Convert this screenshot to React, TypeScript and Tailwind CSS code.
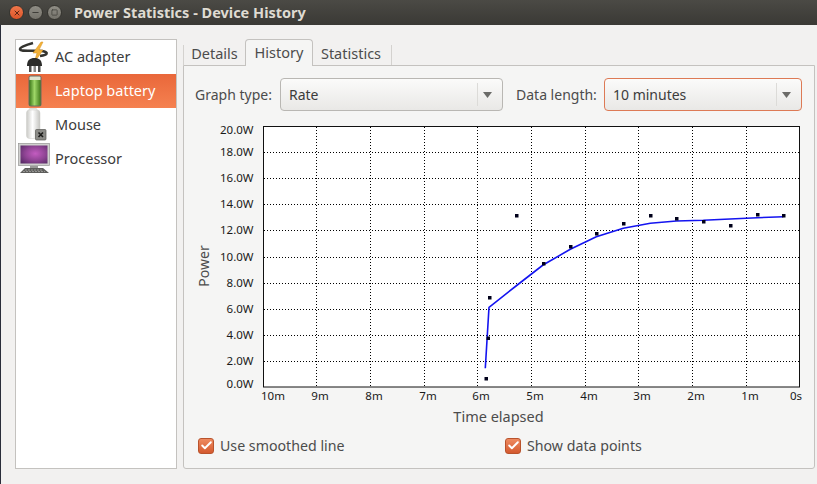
import React from 'react';
import { Check, Minus, Square, X } from 'lucide-react';

const hLines = [152.5, 178.5, 204.5, 230.5, 257.5, 283.5, 309.5, 335.5, 361.5];
const vLines = [316.5, 370.5, 424.5, 477.5, 531.5, 585.5, 638.5, 692.5, 746.5];

const yLabels: [string, number][] = [
  ['20.0W', 130], ['18.0W', 152], ['16.0W', 178], ['14.0W', 204], ['12.0W', 230], ['10.0W', 257],
  ['8.0W', 283], ['6.0W', 309], ['4.0W', 335], ['2.0W', 361], ['0.0W', 384],
];
const xLabels: [string, number][] = [
  ['10m', 273], ['9m', 320], ['8m', 374], ['7m', 428], ['6m', 481], ['5m', 535],
  ['4m', 589], ['3m', 642], ['2m', 696], ['1m', 750], ['0s', 796],
];

const linePts =
  '485.3,368.3 489,307.3 516,286 543,265 570.3,249.3 596.3,236.7 623.3,228.3 650.3,223.3 676.3,221 703.3,220.3 730,219 757.3,217.7 783.3,216.7';
const dataPts = [
  [486, 378.5], [488, 338], [489.5, 297.5], [516.5, 215.5], [543.5, 263.5], [570.5, 246.5], [596.5, 233.5],
  [623.5, 223.5], [650.5, 215.5], [676.5, 218.5], [703.5, 221.5], [730.5, 225.5], [757.5, 214.5], [783.5, 215.5],
];

const PlugIcon = () => (
  <svg width="34" height="34" viewBox="0 0 34 34" className="shrink-0">
    <path d="M15 3 C8 5 2 7 2 9 C2 12 14 10 24 11 C31 12 30 15 22 16" fill="none" stroke="#33332f" strokeWidth="2.6" />
    <path d="M23 2 L15 13 L19 13 L16 23 L25 10 L21 10 L25 2 Z" fill="#f3b23a" stroke="#d6901e" strokeWidth="0.5" />
    <path d="M9 26 C9 20 12 18 16.5 18 C21 18 24 20 24 26 Z" fill="#2c2c2a" />
    <rect x="11" y="26" width="2.5" height="6" fill="#4c4c4a" />
    <rect x="15.5" y="26" width="2.5" height="6" fill="#8a8a88" />
    <rect x="20" y="26" width="2.5" height="6" fill="#4c4c4a" />
  </svg>
);

const BatteryIcon = () => (
  <svg width="34" height="34" viewBox="0 0 34 34" className="shrink-0">
    <defs>
      <linearGradient id="batGreen" x1="0" x2="1" y1="0" y2="0">
        <stop offset="0" stopColor="#3f7a1c" />
        <stop offset="0.45" stopColor="#9fd768" />
        <stop offset="1" stopColor="#437c1c" />
      </linearGradient>
    </defs>
    <rect x="10.5" y="1.5" width="13" height="31" rx="2.5" fill="#6b6b62" />
    <rect x="11.5" y="2.5" width="11" height="4" rx="1" fill="#dfe3cf" />
    <rect x="11.5" y="6" width="11" height="25.5" rx="0.5" fill="url(#batGreen)" />
  </svg>
);

const EmptyBatteryIcon = () => (
  <svg width="34" height="34" viewBox="0 0 34 34" className="shrink-0">
    <defs>
      <linearGradient id="batWhite" x1="0" x2="1" y1="0" y2="0">
        <stop offset="0" stopColor="#c9c9c5" />
        <stop offset="0.45" stopColor="#ffffff" />
        <stop offset="1" stopColor="#c4c4c0" />
      </linearGradient>
    </defs>
    <rect x="11" y="0.5" width="8" height="3" rx="1" fill="#eeeeea" stroke="#c4c4c0" strokeWidth="0.5" />
    <rect x="8.5" y="2" width="13.5" height="28.5" rx="3" fill="url(#batWhite)" stroke="#cfcfcb" strokeWidth="0.5" />
    <rect x="17.5" y="21.5" width="10.5" height="10.5" rx="1" fill="#8a8a86" stroke="#5a5a56" strokeWidth="0.7" />
    <path d="M20.5 24.5 L25 29 M25 24.5 L20.5 29" stroke="#1c1c1a" strokeWidth="1.6" />
  </svg>
);

const MonitorIcon = () => (
  <svg width="34" height="34" viewBox="0 0 34 34" className="shrink-0">
    <defs>
      <radialGradient id="screenPurple" cx="0.55" cy="0.45" r="0.7">
        <stop offset="0" stopColor="#c35cc0" />
        <stop offset="0.55" stopColor="#8f4494" />
        <stop offset="1" stopColor="#5a2c68" />
      </radialGradient>
    </defs>
    <rect x="0.5" y="1.5" width="31" height="22" fill="#d0d0ce" stroke="#959593" strokeWidth="0.7" />
    <rect x="2.5" y="3.5" width="27" height="18" fill="url(#screenPurple)" />
    <rect x="12" y="24" width="8" height="2" fill="#9a9a98" />
    <path d="M2 31 L7 26 L25 26 L31 31 Z" fill="#5e5e5c" />
    <path d="M7 28 L25 28 M5 29.5 L27 29.5" stroke="#b8b8b6" strokeWidth="0.6" strokeDasharray="2 1" />
  </svg>
);

const devices = [
  { name: 'AC adapter', icon: <PlugIcon /> },
  { name: 'Laptop battery', icon: <BatteryIcon />, selected: true },
  { name: 'Mouse', icon: <EmptyBatteryIcon /> },
  { name: 'Processor', icon: <MonitorIcon /> },
];

const Combo = ({ value, width, focused }: { value: string; width: string; focused?: boolean }) => (
  <div
    className={`flex h-[33px] items-center rounded-[4px] border bg-gradient-to-b from-[#fbfbfa] to-[#e9e8e6] ${width} ${
      focused ? 'border-[#dd7a55]' : 'border-[#b9b7b3]'
    }`}
  >
    <span className="flex-1 pl-[8px] text-[14px] text-[#3c3c3c]">{value}</span>
    <span className="h-[23px] w-px bg-[#dcdbd8]" />
    <span className="flex w-[24px] pl-[5px]">
      <svg width="9" height="6" viewBox="0 0 9 6">
        <path d="M0 0 H9 L4.5 6 Z" fill="#6b6b68" />
      </svg>
    </span>
  </div>
);

const CheckItem = ({ label, width }: { label: string; width: string }) => (
  <div className={`flex items-center gap-[6px] ${width}`}>
    <span className="flex h-4 w-4 items-center justify-center rounded-[3px] border border-[#b9532c] bg-gradient-to-b from-[#ee8a60] to-[#d4592e]">
      <Check size={13} strokeWidth={3.5} className="text-white" />
    </span>
    <span className="text-[14.2px] text-[#4c4c4c]">{label}</span>
  </div>
);

const Chart = () => (
  <svg width="631" height="320" viewBox="184 112 631 320" className="block" fontSize="11.5">
    <rect x="263.5" y="126.5" width="536" height="260.5" fill="#fff" />
    {hLines.map((y) => (
      <line key={y} x1="264" x2="799" y1={y} y2={y} stroke="#000" strokeDasharray="1 2" />
    ))}
    {vLines.map((x) => (
      <line key={x} x1={x} x2={x} y1="127" y2="387" stroke="#000" strokeDasharray="1 2" />
    ))}
    <rect x="263.5" y="126.5" width="536" height="260.5" fill="none" stroke="#111" />
    <polyline points={linePts} fill="none" stroke="#1414f0" strokeWidth="1.6" />
    {dataPts.map(([x, y]) => (
      <rect key={x} x={x - 1.5} y={y - 1.5} width="3.5" height="3.5" fill="#00001a" />
    ))}
    {yLabels.map(([t, y]) => (
      <text key={t} x="253.5" y={y + 3.5} textAnchor="end" fill="#1a1a1a">
        {t}
      </text>
    ))}
    {xLabels.map(([t, x]) => (
      <text key={t} x={x} y="399.5" textAnchor="middle" fill="#1a1a1a">
        {t}
      </text>
    ))}
    <text x="498.5" y="421.5" textAnchor="middle" fontSize="14.5" fill="#4c4c4c">
      Time elapsed
    </text>
    <text x="0" y="0" textAnchor="middle" fontSize="14" fill="#4c4c4c" transform="translate(209 266) rotate(-90)">
      Power
    </text>
  </svg>
);

export default function App() {
  return (
    <div className="flex h-[484px] w-[817px] flex-col overflow-hidden bg-[#f2f1f0] font-['Noto_Sans',sans-serif]">
      {/* title bar */}
      <div className="flex h-[25px] shrink-0 items-center gap-[4px] bg-gradient-to-b from-[#4b4a45] to-[#3a3935] pl-[9px]">
        <span className="flex h-[15px] w-[15px] items-center justify-center rounded-full border border-[#35342f] bg-gradient-to-b from-[#f0774a] to-[#dc5529] text-[#5a2412]">
          <X size={8} strokeWidth={3} />
        </span>
        <span className="flex h-[15px] w-[15px] items-center justify-center rounded-full border border-[#35342f] bg-gradient-to-b from-[#8f8d85] to-[#75736b] text-[#3f3e39]">
          <Minus size={9} strokeWidth={3} />
        </span>
        <span className="flex h-[15px] w-[15px] items-center justify-center rounded-full border border-[#35342f] bg-gradient-to-b from-[#8f8d85] to-[#75736b] text-[#3f3e39]">
          <Square size={7} strokeWidth={2.5} />
        </span>
        <span className="ml-[8px] text-[14.5px] font-bold text-[#dfdbd2]">Power Statistics - Device History</span>
      </div>

      <div className="flex flex-1 border-l border-[#2a2d3a] pl-[14px] pt-[14px]">
        {/* device list */}
        <div className="h-[430px] w-[162px] shrink-0 border border-[#c4c2bf] bg-white">
          {devices.map((d) => (
            <div
              key={d.name}
              className={`flex h-[34px] items-center pl-[2px] ${
                d.selected ? 'bg-gradient-to-b from-[#e9673a] to-[#f58150] text-white' : 'text-[#3c3c3c]'
              }`}
            >
              {d.icon}
              <span className="ml-[3px] text-[14.5px]">{d.name}</span>
            </div>
          ))}
        </div>

        <div className="ml-[6px] flex w-[632px] flex-col">
          {/* tabs */}
          <div className="relative z-10 flex h-[26px] items-end text-[14.5px] text-[#4c4c4c]">
            <div className="flex h-[20px] w-[62px] items-center justify-center border-l border-[#d4d2cf] pb-[2px]">Details</div>
            <div className="-mb-px flex h-[27px] w-[68px] items-center justify-center rounded-t-[4px] border border-b-0 border-[#c4c2bf] bg-[#f5f5f4]">
              History
            </div>
            <div className="flex h-[20px] w-[79px] items-center justify-center border-r border-[#d4d2cf] pb-[2px] pr-[2px]">Statistics</div>
          </div>

          {/* history page */}
          <div className="flex h-[404px] flex-col rounded-b-[3px] border border-[#c4c2bf] bg-[#f5f5f4]">
            <div className="flex items-center pl-[11px] pt-[12px] text-[14px] text-[#4c4c4c]">
              <span className="w-[85px]">Graph type:</span>
              <Combo value="Rate" width="w-[223px]" />
              <span className="ml-[13px] w-[88px]">Data length:</span>
              <Combo value="10 minutes" width="w-[198px]" focused />
            </div>
            <div className="mt-[1px]">
              <Chart />
            </div>
            <div className="mt-[3px] flex pl-[14px]">
              <CheckItem label="Use smoothed line" width="w-[307px]" />
              <CheckItem label="Show data points" width="w-[200px]" />
            </div>
          </div>
        </div>
      </div>
    </div>
  );
}
